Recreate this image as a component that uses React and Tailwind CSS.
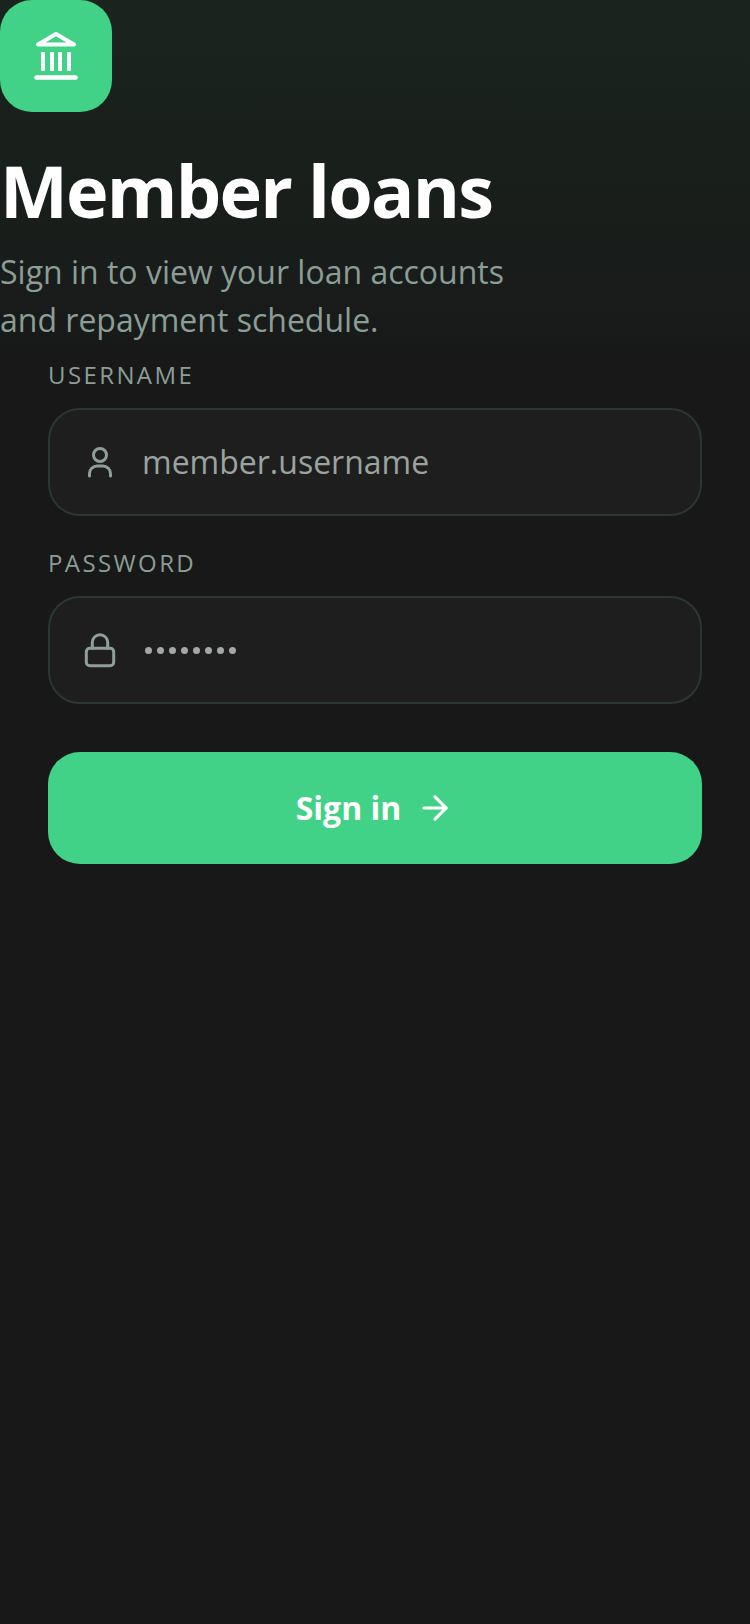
import React from 'react';
import { ArrowRight } from 'lucide-react';

const BankIcon = () => (
  <svg width="48" height="50" viewBox="0 0 48 50" fill="none" stroke="#fff" strokeLinecap="round" strokeLinejoin="round">
    <path d="M6 13.500L24 3L42 13.500Z" strokeWidth="4" />
    <path d="M11 21V40M20 21V40M28 21V40M37 21V40" strokeWidth="4" strokeLinecap="butt" />
    <path d="M4.500 46.500H43.500" strokeWidth="4.500" />
  </svg>
);

const UserIcon = () => (
  <svg width="36" height="36" viewBox="0 0 36 36" fill="none" stroke="#8f9f98" strokeWidth="3" strokeLinecap="round" className="shrink-0">
    <circle cx="18" cy="11" r="6.500" />
    <path d="M7.500 32V29.500A7.500 7.500 0 0 1 15 22H21A7.500 7.500 0 0 1 28.500 29.500V32" />
  </svg>
);

const LockIcon = () => (
  <svg width="36" height="36" viewBox="0 0 36 36" fill="none" stroke="#8f9f98" strokeWidth="3" strokeLinecap="round" className="shrink-0">
    <rect x="4.300" y="16.300" width="27.400" height="17.400" rx="3.500" />
    <path d="M10.300 16V10.500A7.700 7.700 0 0 1 25.700 10.500V16" />
  </svg>
);

const Field = ({ label, icon, children }) => (
  <div className="flex flex-col gap-[17px]">
    <label className="text-[24px] leading-[32px] tracking-[2.4px] text-[#8a9e96]">{label}</label>
    <div className="flex h-[108px] items-center rounded-[32px] border-2 border-[#2a3733] bg-[#1e1e1e] pl-[34px]">
      <span className="flex w-[32px] justify-center">{icon}</span>
      <div className="ml-[26px]">{children}</div>
    </div>
  </div>
);

export default function App() {
  return (
    <div className="min-h-[1624px] bg-[#181818] font-['Open_Sans',sans-serif]">
      <header className="h-[344px] bg-gradient-to-b from-[#1a241e] to-[#181a19]">
        <div className="flex h-[112px] w-[112px] items-center justify-center rounded-[32px] bg-[#41d287]">
          <BankIcon />
        </div>
        <h1 className="mt-[36px] text-[72px] font-bold leading-[84px] tracking-[-1.8px] text-white">Member loans</h1>
        <p className="mt-[16px] text-[32px] leading-[48px] text-[#8a9e96]">
          Sign in to view your loan accounts
          <br />
          and repayment schedule.
        </p>
      </header>

      <form className="flex flex-col gap-[31px] px-[48px] pt-[15px]">
        <Field label="USERNAME" icon={<UserIcon />}>
          <span className="text-[32px] leading-[44px] text-[#9aa39f]">member.username</span>
        </Field>
        <Field label="PASSWORD" icon={<LockIcon />}>
          <span className="ml-[3px] flex gap-[5px]">
            {[...Array(8)].map((_, i) => (
              <span key={i} className="h-[7px] w-[7px] rounded-full bg-[#a3a8a5]" />
            ))}
          </span>
        </Field>
        <button type="button" className="mt-[17px] flex h-[112px] items-center justify-center gap-[15px] rounded-[32px] bg-[#41d287] text-[32px] font-bold text-white">
          Sign in
          <ArrowRight size={38} strokeWidth={2} />
        </button>
      </form>
    </div>
  );
}
